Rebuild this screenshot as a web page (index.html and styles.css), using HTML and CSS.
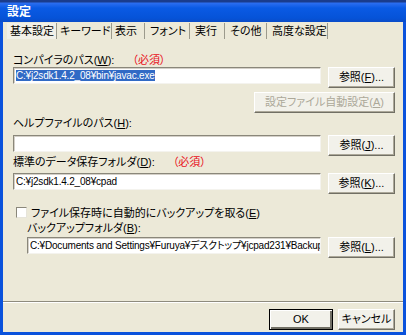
FILE: index.html
```html
<!DOCTYPE html>
<html lang="ja">
<head>
    <meta charset="UTF-8">
    <title>設定</title>
    <link rel="stylesheet" href="styles.css">
</head>
<body>
    <div class="window">
        <div class="titlebar">設定</div>

        <div class="tabs">
            <div class="tab active">基本設定</div>
            <div class="tab">キーワード</div>
            <div class="tab">表示</div>
            <div class="tab">フォント</div>
            <div class="tab">実行</div>
            <div class="tab">その他</div>
            <div class="tab">高度な設定</div>
        </div>

        <div class="page">
            <div class="label">コンパイラのパス(<u>W</u>):<span class="req">（必須）</span></div>
            <div class="row">
                <div class="field"><span class="sel">C:¥j2sdk1.4.2_08¥bin¥javac.exe</span></div>
                <button class="btn">参照(<u>F</u>)...</button>
            </div>
            <div class="row-right">
                <button class="btn wide" disabled>設定ファイル自動設定(<u>A</u>)</button>
            </div>

            <div class="label label-help">ヘルプファイルのパス(<u>H</u>):</div>
            <div class="row">
                <div class="field"></div>
                <button class="btn">参照(<u>J</u>)...</button>
            </div>

            <div class="label label-data">標準のデータ保存フォルダ(<u>D</u>):<span class="req">（必須）</span></div>
            <div class="row row-data">
                <div class="field">C:¥j2sdk1.4.2_08¥cpad</div>
                <button class="btn">参照(<u>K</u>)...</button>
            </div>

            <div class="check-row">
                <span class="checkbox"></span>
                <span>ファイル保存時に自動的にバックアップを取る(<u>E</u>)</span>
            </div>
            <div class="indent">
                <div class="label label-backup">バックアップフォルダ(<u>B</u>):</div>
                <div class="row">
                    <div class="field">C:¥Documents and Settings¥Furuya¥デスクトップ¥jcpad231¥Backup</div>
                    <button class="btn">参照(<u>L</u>)...</button>
                </div>
            </div>
        </div>

        <div class="footer">
            <button class="btn default">OK</button>
            <button class="btn">キャンセル</button>
        </div>
    </div>
</body>
</html>
```

FILE: styles.css
```css
body {
    margin: 0;
    font-family: "Liberation Sans", "Noto Sans CJK JP", sans-serif;
    font-size: 11px;
    font-feature-settings: "palt";
    color: #000;
    background-color: #ece9d8;
}
.window {
    width: 406px;
    height: 335px;
    box-sizing: border-box;
    border: 3px solid #0a52dc;
    border-top: none;
    background-color: #ece9d8;
    display: flex;
    flex-direction: column;
}
.titlebar {
    height: 22px;
    margin: 0 -3px;
    padding: 5px 0 0 7px;
    box-sizing: border-box;
    background: linear-gradient(#1a3c8c 0, #1a3c8c 2px, #2c6ef0 3px, #0a5ae4 8px, #0653d8 18px, #0a4cc8 22px);
    color: #fff;
    font-weight: bold;
    font-size: 12px;
    line-height: 14px;
}
.tabs {
    height: 18px;
    display: flex;
    padding-left: 4px;
    line-height: 18px;
}
.tab {
    padding-left: 3px;
    border-right: 1px solid #9c9a8c;
    box-sizing: border-box;
    height: 16px;
    line-height: 16px;
    margin-top: 1px;
}
.tab:nth-child(1) { width: 50px; padding-left: 3px; background-color: #f1f0e8; }
.tab:nth-child(2) { width: 55px; }
.tab:nth-child(3) { width: 33px; }
.tab:nth-child(4) { width: 45px; padding-left: 5px; }
.tab:nth-child(5) { width: 35px; padding-left: 5px; }
.tab:nth-child(6) { width: 42px; padding-left: 5px; }
.tab:nth-child(7) { width: 61px; padding-left: 5px; }

.page {
    height: 262px;
    box-sizing: border-box;
    padding: 14px 8px 0 10px;
    border-bottom: 1px solid #8e8b7e;
}
.label {
    height: 13px;
    line-height: 13px;
}
.req {
    color: #e8101a;
    margin-left: 18px;
}
.row {
    display: flex;
    justify-content: space-between;
    height: 18px;
}
.row-right {
    display: flex;
    justify-content: flex-end;
    margin-top: 7px;
}
.label-help { margin-top: 4px; }
.label-help + .row { margin-top: 5px; }
.label-data { margin-top: 3px; }
.row-data { margin-top: 4px; }
.field {
    width: 308px;
    height: 17px;
    box-sizing: border-box;
    background-color: #fff;
    border: 1px solid;
    border-color: #8a877a #f4f3ee #f4f3ee #8a877a;
    box-shadow: inset 1px 1px #d4d0c8;
    padding: 1px 2px;
    font-size: 10px;
    letter-spacing: -0.2px;
    line-height: 13px;
    white-space: nowrap;
    overflow: hidden;
}
.sel {
    background-color: #316ac5;
    color: #fff;
}
.btn {
    width: 67px;
    height: 21px;
    flex-shrink: 0;
    font-family: inherit;
    font-size: 11px;
    font-feature-settings: "palt";
    color: #000;
    background-color: #f2f1ea;
    border: 1px solid;
    border-color: #fff #716f64 #716f64 #fff;
    box-shadow: inset -1px -1px #aca899;
    padding: 0;
    line-height: 17px;
}
.btn.wide {
    width: 141px;
}
.btn:disabled {
    color: #aca899;
}
.btn.default {
    border: 1px solid #000;
    box-shadow: inset 1px 1px #fff, inset -2px -2px #716f64;
    width: 64px;
}
.check-row {
    display: flex;
    align-items: center;
    gap: 4px;
    height: 14px;
    margin-top: 14px;
    padding-left: 3px;
}
.checkbox {
    width: 11px;
    height: 11px;
    box-sizing: border-box;
    background-color: #fff;
    border: 1px solid;
    border-color: #8a877a #e6e4da #e6e4da #8a877a;
}
.indent {
    padding-left: 14px;
}
.label-backup {
    margin-top: 3px;
}
.indent .row {
    margin-top: 2px;
}
.indent .field {
    width: 294px;
}
.footer {
    flex: 1;
    border-top: 1px solid #fff;
    display: flex;
    justify-content: flex-end;
    align-items: flex-start;
    gap: 5px;
    padding: 6px 8px 0 0;
}
.footer .btn:last-child {
    width: 57px;
}
```
